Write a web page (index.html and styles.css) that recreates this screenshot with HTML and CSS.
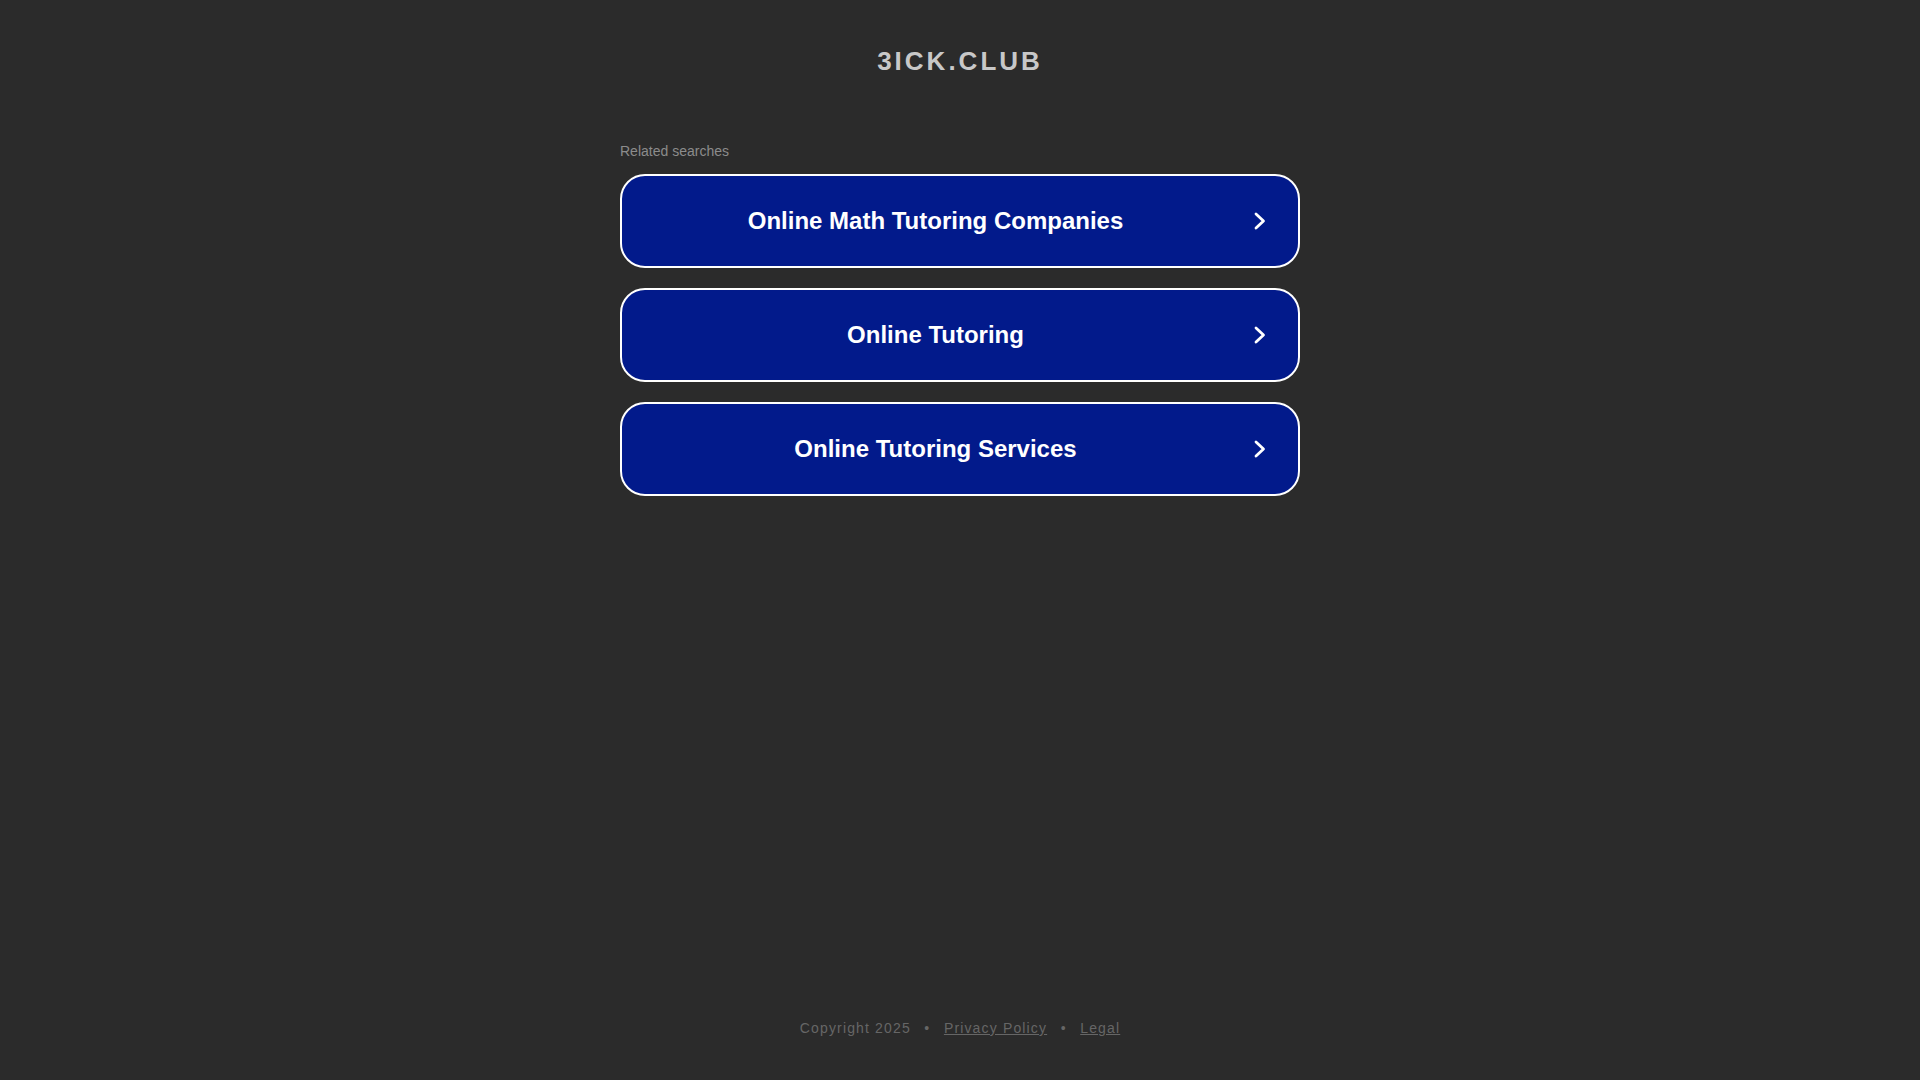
FILE: index.html
```html
<!DOCTYPE html>
<html lang="en">
<head>
<meta charset="utf-8">
<title>3ick.club</title>
<link rel="stylesheet" href="styles.css">
</head>
<body>
<div class="page">
  <header class="header">
    <h1 class="domain">3ICK.CLUB</h1>
  </header>
  <main class="container">
    <div class="related">Related searches</div>
    <div class="links">
      <a class="link" href="#"><span class="link-text">Online Math Tutoring Companies</span><svg class="chev" viewBox="0 0 12 18" width="12" height="18"><path d="M2 2 L9.5 9 L2 16" fill="none" stroke="#fff" stroke-width="2.8" stroke-linecap="round" stroke-linejoin="round"/></svg></a>
      <a class="link" href="#"><span class="link-text">Online Tutoring</span><svg class="chev" viewBox="0 0 12 18" width="12" height="18"><path d="M2 2 L9.5 9 L2 16" fill="none" stroke="#fff" stroke-width="2.8" stroke-linecap="round" stroke-linejoin="round"/></svg></a>
      <a class="link" href="#"><span class="link-text">Online Tutoring Services</span><svg class="chev" viewBox="0 0 12 18" width="12" height="18"><path d="M2 2 L9.5 9 L2 16" fill="none" stroke="#fff" stroke-width="2.8" stroke-linecap="round" stroke-linejoin="round"/></svg></a>
    </div>
  </main>
  <footer class="footer">
    <span>Copyright 2025</span><span class="dot">•</span><a href="#">Privacy Policy</a><span class="dot">•</span><a href="#">Legal</a>
  </footer>
</div>
</body>
</html>
```
FILE: styles.css
```css
html, body {
  margin: 0;
  padding: 0;
  background: #2b2b2b;
  font-family: "Liberation Sans", Arial, sans-serif;
}

.page {
  min-height: 100vh;
  display: flex;
  flex-direction: column;
  align-items: center;
}

.header {
  padding-top: 46px;
}

.domain {
  margin: 0;
  font-size: 26px;
  line-height: 30px;
  font-weight: bold;
  letter-spacing: 3px;
  color: #c8c8c8;
  text-align: center;
}

.container {
  width: 680px;
  margin-top: 67px;
}

.related {
  font-size: 14px;
  line-height: 16px;
  color: #8c8c8c;
  margin-bottom: 15px;
}

.links {
  display: flex;
  flex-direction: column;
  gap: 20px;
}

.link {
  display: flex;
  align-items: center;
  box-sizing: border-box;
  height: 94px;
  border: 2px solid #ffffff;
  border-radius: 25px;
  background: #021a8b;
  color: #ffffff;
  text-decoration: none;
}

.link-text {
  flex: 1;
  text-align: center;
  font-size: 24px;
  font-weight: bold;
  line-height: 28px;
}

.chev {
  flex: none;
  margin: 0 32px 0 5px;
}

.footer {
  margin-top: auto;
  padding-bottom: 44px;
  font-size: 14px;
  line-height: 16px;
  letter-spacing: 1.15px;
  color: #666666;
  display: flex;
}

.footer a {
  color: #666666;
  text-decoration: underline;
}

.dot {
  margin: 0 13.5px;
}
```
